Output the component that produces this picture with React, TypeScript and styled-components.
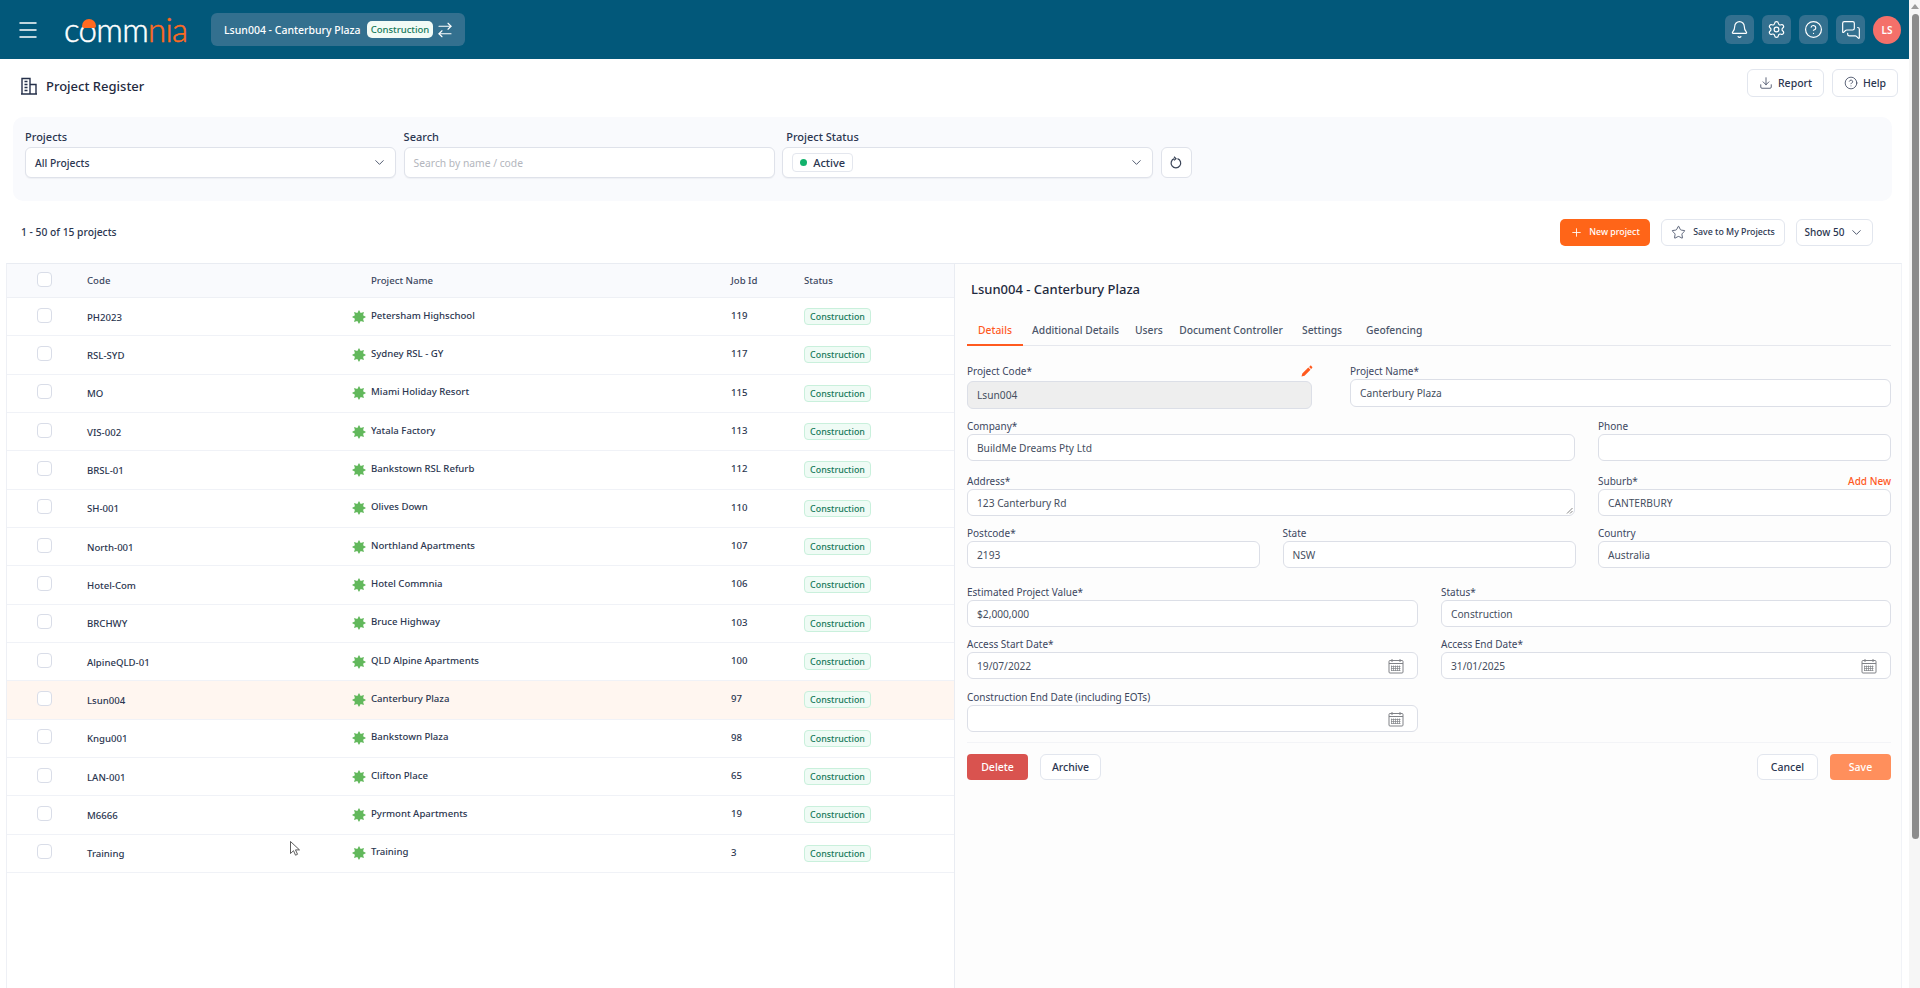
import React from "react";
import styled, { createGlobalStyle } from "styled-components";
import {
  ArrowRightLeft,
  Bell,
  ChevronDown,
  CircleHelp,
  Download,
  Menu,
  MessagesSquare,
  Plus,
  Settings,
  Star,
} from "lucide-react";

const GlobalStyle = createGlobalStyle`
  html, body, #root { margin: 0; padding: 0; height: 988px; overflow: hidden; }
  body { font-family: "Noto Sans", "Open Sans", Arial, sans-serif; color: #2b3650; background: #fff; }
  * { box-sizing: border-box; }
`;

const Shell = styled.div`
  display: flex;
  width: 1920px;
  height: 988px;
  position: relative;
`;

const Main = styled.div`
  width: 1909px;
  display: flex;
  flex-direction: column;
`;

const ScrollTrack = styled.div`
  width: 11px;
  background: #f6f6f6;
  display: flex;
  flex-direction: column;
  align-items: center;
  padding-top: 4px;
`;

const ScrollArrow = styled.div`
  width: 0;
  height: 0;
  border-left: 4px solid transparent;
  border-right: 4px solid transparent;
  border-bottom: 5px solid #9a9a9a;
  margin-bottom: 5px;
`;

const ScrollThumb = styled.div`
  width: 7px;
  height: 825px;
  margin-left: 1px;
  border-radius: 4px;
  background: #8c8c8c;
`;

const Header = styled.header`
  height: 59px;
  background: #02587a;
  display: flex;
  align-items: center;
  padding: 0 8px 0 16px;
`;

const Burger = styled.div`
  color: #fff;
  display: flex;
  width: 24px;
  margin-right: 24px;
`;

const Logo = styled.div`
  width: 123px;
  margin-right: 24px;
  margin-top: -2px;
  font-family: "Lato", sans-serif;
  font-weight: 300;
  font-size: 33px;
  line-height: 34px;
  letter-spacing: -0.7px;
  -webkit-text-stroke: 0.5px currentColor;
  color: #fff;
  white-space: nowrap;
`;

const LogoAccent = styled.span`
  color: #ff6a21;
`;

const LogoFace = styled.span`
  position: relative;
  &::after {
    content: "";
    position: absolute;
    left: 3px;
    top: 10px;
    width: 14px;
    height: 9px;
    border-radius: 7px 7px 2px 2px;
    background: #ff6a21;
  }
`;

const ProjectChip = styled.div`
  width: 254px;
  height: 33px;
  border-radius: 6px;
  background: #33708f;
  display: flex;
  align-items: center;
  padding-left: 13px;
  color: #fff;
  font-size: 10.5px;
  font-weight: 500;
  white-space: nowrap;
`;

const ChipName = styled.span`
  width: 143px;
`;

const ChipBadge = styled.span`
  width: 66px;
  height: 17px;
  border-radius: 5px;
  background: #f1fbf6;
  color: #15795a;
  font-size: 9.5px;
  font-weight: 500;
  display: flex;
  align-items: center;
  justify-content: center;
  margin-right: 3px;
`;

const HeaderActions = styled.div`
  margin-left: auto;
  display: flex;
  align-items: center;
  gap: 8px;
`;

const HeaderButton = styled.div`
  width: 29px;
  height: 29px;
  border-radius: 6px;
  background: #33708f;
  color: #fff;
  display: flex;
  align-items: center;
  justify-content: center;
`;

const Avatar = styled.div`
  width: 28px;
  height: 28px;
  border-radius: 50%;
  background: #f4706a;
  color: #fff;
  font-size: 10px;
  font-weight: 600;
  display: flex;
  align-items: center;
  justify-content: center;
`;

const TitleRow = styled.div`
  height: 58px;
  display: flex;
  justify-content: space-between;
  padding: 10px 11px 0 20px;
`;

const PageTitle = styled.div`
  display: flex;
  align-items: center;
  gap: 8px;
  height: 18px;
  margin-top: 8px;
  font-size: 13px;
  font-weight: 500;
  color: #1f2a40;
`;

const TitleActions = styled.div`
  display: flex;
  gap: 8px;
`;

const GhostButton = styled.button<{ $w: number; $h?: number; $size?: number; $gap?: number }>`
  width: ${(p) => p.$w}px;
  height: ${(p) => p.$h ?? 28}px;
  border: 1px solid #e2e6ee;
  border-radius: 6px;
  background: #fff;
  color: #2b3650;
  font-family: inherit;
  font-size: ${(p) => p.$size ?? 10.5}px;
  font-weight: 500;
  display: flex;
  align-items: center;
  justify-content: center;
  gap: ${(p) => p.$gap ?? 5}px;
  padding: 0;
  white-space: nowrap;
`;

const FilterPanel = styled.section`
  height: 84px;
  margin: 0 17px 0 13px;
  padding: 12px 12px 23px;
  border-radius: 10px;
  background: #f9fafd;
  display: flex;
  align-items: flex-end;
  gap: 7.6px;
`;

const FilterField = styled.div`
  width: 371px;
  display: flex;
  flex-direction: column;
`;

const FilterLabel = styled.label<{ $inset?: number }>`
  font-size: 11px;
  font-weight: 500;
  line-height: 16px;
  margin-bottom: 2px;
  padding-left: ${(p) => p.$inset ?? 0}px;
  color: #2b3650;
`;

const SelectBox = styled.div`
  height: 31px;
  border: 1px solid #dfe2ea;
  border-radius: 6px;
  background: #fff;
  display: flex;
  align-items: center;
  justify-content: space-between;
  padding: 0 8px 0 9px;
  font-size: 10.3px;
  font-weight: 500;
  box-shadow: 0 1px 1px rgba(40, 50, 80, 0.05);
`;

const Placeholder = styled.span`
  color: #b3b6bd;
  font-weight: 400;
`;

const StatusTag = styled.span`
  height: 19px;
  padding: 0 7px;
  border: 1px solid #e4e7ee;
  border-radius: 4px;
  display: flex;
  align-items: center;
  gap: 6px;
  font-size: 11px;
`;

const Dot = styled.span`
  width: 7px;
  height: 7px;
  border-radius: 50%;
  background: #12b26c;
`;

const ResetButton = styled.div`
  width: 31px;
  height: 31px;
  border: 1px solid #dfe2ea;
  border-radius: 6px;
  background: #fff;
  display: flex;
  align-items: center;
  justify-content: center;
  color: #3b4558;
`;

const Toolbar = styled.div`
  height: 62px;
  display: flex;
  align-items: center;
  padding: 0 36px 0 21px;
`;

const Count = styled.div`
  font-size: 10.3px;
  font-weight: 500;
  margin-right: auto;
`;

const ToolbarActions = styled.div`
  display: flex;
  gap: 11px;
`;

const PrimaryButton = styled.button`
  width: 90px;
  height: 27px;
  border: 0;
  border-radius: 5px;
  background: #ff6518;
  color: #fff;
  font-family: inherit;
  font-size: 8.8px;
  font-weight: 500;
  display: flex;
  align-items: center;
  justify-content: center;
  gap: 6px;
  padding: 0;
`;

const Split = styled.div`
  flex: 1;
  display: flex;
  min-height: 0;
  margin: 0 7px 0 6px;
  border-top: 1px solid #e9ecf2;
  border-left: 1px solid #eef0f5;
  border-right: 1px solid #f1f3f7;
`;

const TablePane = styled.div`
  width: 948px;
  border-right: 1px solid #e9ecf2;
`;

const HeadRow = styled.div`
  height: 34px;
  display: grid;
  grid-template-columns: 50px 265px 379px 73px 1fr;
  align-items: center;
  padding-left: 30px;
  background: #f9fafd;
  border-bottom: 1px solid #eef0f5;
  font-size: 9.6px;
  font-weight: 500;
  color: #3c475f;
`;

const Row = styled.div<{ $active?: boolean }>`
  height: 38.33px;
  display: grid;
  grid-template-columns: 50px 265px 379px 73px 1fr;
  align-items: center;
  padding-left: 30px;
  background: ${(p) => (p.$active ? "#fff6f0" : "#fff")};
  border-bottom: 1px solid #f0f2f7;
  font-size: 9.6px;
  font-weight: 500;
  color: #2b3650;
`;

const Check = styled.div`
  width: 15px;
  height: 15px;
  border: 1px solid #d9dde8;
  border-radius: 4px;
  background: #fff;
  margin-top: -3px;
`;

const CodeCell = styled.div`
  padding-top: 1px;
`;

const NameHead = styled.div`
  padding-left: 19px;
`;

const NameCell = styled.div`
  display: flex;
  align-items: center;
  gap: 5px;
`;

const NameText = styled.span`
  margin-top: -3px;
`;

const JobCell = styled.div`
  margin-top: -2px;
`;

const StatusBadge = styled.span`
  width: 67px;
  height: 17px;
  border: 1px solid #c9f0dc;
  border-radius: 4px;
  background: #effbf5;
  color: #15795a;
  font-size: 8.9px;
  font-weight: 500;
  display: flex;
  align-items: center;
  justify-content: center;
`;

const DetailPane = styled.div`
  flex: 1;
  padding: 15px 10px 0 12px;
  background: #fdfdfd;
`;

const DetailTitle = styled.h2`
  margin: 0 0 0 4px;
  font-size: 13px;
  line-height: 20px;
  font-weight: 500;
  color: #1f2a40;
`;

const TabBar = styled.div`
  display: flex;
  margin-top: 17px;
  height: 30px;
  border-bottom: 1px solid #e6e8ee;
`;

const Tab = styled.div<{ $active?: boolean; $mr: number; $w: number }>`
  width: ${(p) => p.$w}px;
  margin-right: ${(p) => p.$mr}px;
  height: 30px;
  text-align: center;
  white-space: nowrap;
  font-size: 10.3px;
  font-weight: 500;
  line-height: 28px;
  color: ${(p) => (p.$active ? "#ff5a1f" : "#4c566a")};
  border-bottom: ${(p) => (p.$active ? "2px solid #ff5a1f" : "0")};
`;

const FormRow = styled.div<{ $cols: string; $gap: number; $top: number }>`
  display: grid;
  grid-template-columns: ${(p) => p.$cols};
  column-gap: ${(p) => p.$gap}px;
  margin-top: ${(p) => p.$top}px;
  align-items: start;
`;

const FormField = styled.div`
  display: flex;
  flex-direction: column;
`;

const LabelLine = styled.div<{ $h?: number }>`
  display: flex;
  align-items: flex-start;
  justify-content: space-between;
  height: ${(p) => p.$h ?? 16}px;
  line-height: 16px;
`;

const Label = styled.label`
  font-size: 10px;
  color: #3c475f;
`;

const AddNew = styled.span`
  font-size: 10px;
  font-weight: 500;
  color: #ff5a1f;
`;

const PencilWrap = styled.span`
  display: flex;
  margin: 2px -1px 0 0;
`;

const Input = styled.div<{ $disabled?: boolean; $h?: number }>`
  position: relative;
  height: ${(p) => p.$h ?? 27}px;
  border: 1px solid #dcdfe7;
  border-radius: 6px;
  background: ${(p) => (p.$disabled ? "#eeeeee" : "#fff")};
  display: flex;
  align-items: center;
  justify-content: space-between;
  padding: 0 13px 0 9px;
  font-size: 10.2px;
  color: #454e60;
`;

const Grip = styled.svg`
  position: absolute;
  right: 1px;
  bottom: 1px;
`;

const FormFooter = styled.div`
  display: flex;
  justify-content: space-between;
  margin-top: 10px;
  padding-top: 11px;
  border-top: 1px solid #f3f4f7;
`;

const FooterGroup = styled.div<{ $gap: number }>`
  display: flex;
  gap: ${(p) => p.$gap}px;
`;

const SolidButton = styled.button<{ $bg: string }>`
  width: 61px;
  height: 26px;
  border: 0;
  border-radius: 4px;
  background: ${(p) => p.$bg};
  color: #fff;
  font-family: inherit;
  font-size: 10.5px;
  font-weight: 500;
  padding: 0;
`;

const Cursor = styled.svg`
  position: absolute;
  left: 290px;
  top: 841px;
`;

const BuildingIcon = () => (
  <svg width="18" height="18" viewBox="0 0 18 18" fill="none" stroke="#25304a" strokeWidth="1.4">
    <path d="M1 17h16M2 17V1.5h8V17M10 7.5h6V17" />
    <path d="M4.5 4.5h3M4.5 7.5h3M4.5 10.5h3M4.5 13.5h3" />
  </svg>
);

const ResetIcon = () => (
  <svg width="14" height="14" viewBox="0 0 14 14" fill="none" stroke="#3b4558" strokeWidth="1.2">
    <path d="M8.5 2.6a4.8 4.8 0 1 1-3.2 0" />
    <path d="M5 0.8L7 2.7 5 4.4" />
  </svg>
);

const SEAL_POINTS = Array.from({ length: 16 }, (_, i) => {
  const r = i % 2 === 0 ? 7 : 4.4;
  const a = (i * Math.PI) / 8 - Math.PI / 2;
  return `${(7 + r * Math.cos(a)).toFixed(2)},${(7 + r * Math.sin(a)).toFixed(2)}`;
}).join(" ");

const Seal = () => (
  <svg width="14" height="14" viewBox="0 0 14 14">
    <polygon points={SEAL_POINTS} fill="#62b85c" />
  </svg>
);

const CalendarIcon = () => (
  <svg width="16" height="16" viewBox="0 0 16 16" fill="none" stroke="#808287" strokeWidth="1">
    <rect x="1" y="2.5" width="14" height="12.5" rx="1" />
    <path d="M1 5.5h14M4 1v3M12 1v3" />
    <path d="M3.5 7.5v5.5M5.5 7.5v5.5M7.5 7.5v5.5M9.5 7.5v5.5M11.5 7.5v5.5M3 8.5h9.5M3 10.5h9.5M3 12.5h9.5" strokeWidth="0.7" />
  </svg>
);

const PencilIcon = () => (
  <svg width="12" height="12" viewBox="0 0 12 12" fill="#ff5a1f">
    <path d="M0.5 11.5l0.8-3 6-6 2.2 2.2-6 6zM8.1 1.9l1-1c.4-.4.9-.4 1.2 0l.8.8c.4.3.4.8 0 1.2l-1 1z" />
  </svg>
);

const projects = [
  ["PH2023", "Petersham Highschool", "119"],
  ["RSL-SYD", "Sydney RSL - GY", "117"],
  ["MO", "Miami Holiday Resort", "115"],
  ["VIS-002", "Yatala Factory", "113"],
  ["BRSL-01", "Bankstown RSL Refurb", "112"],
  ["SH-001", "Olives Down", "110"],
  ["North-001", "Northland Apartments", "107"],
  ["Hotel-Com", "Hotel Commnia", "106"],
  ["BRCHWY", "Bruce Highway", "103"],
  ["AlpineQLD-01", "QLD Alpine Apartments", "100"],
  ["Lsun004", "Canterbury Plaza", "97"],
  ["Kngu001", "Bankstown Plaza", "98"],
  ["LAN-001", "Clifton Place", "65"],
  ["M6666", "Pyrmont Apartments", "19"],
  ["Training", "Training", "3"],
];

const tabs = [
  { label: "Details", w: 56, mr: 9 },
  { label: "Additional Details", w: 87, mr: 16 },
  { label: "Users", w: 27, mr: 17 },
  { label: "Document Controller", w: 104, mr: 19 },
  { label: "Settings", w: 40, mr: 24 },
  { label: "Geofencing", w: 56, mr: 0 },
];

const App = () => {
  return (
    <Shell>
      <GlobalStyle />
      <Main>
        <Header>
          <Burger>
            <Menu size={24} strokeWidth={1.5} />
          </Burger>
          <Logo>
            c<LogoFace>o</LogoFace>mm<LogoAccent>nia</LogoAccent>
          </Logo>
          <ProjectChip>
            <ChipName>Lsun004 - Canterbury Plaza</ChipName>
            <ChipBadge>Construction</ChipBadge>
            <ArrowRightLeft size={18} strokeWidth={1.5} />
          </ProjectChip>
          <HeaderActions>
            <HeaderButton><Bell size={19} strokeWidth={1.5} /></HeaderButton>
            <HeaderButton><Settings size={19} strokeWidth={1.5} /></HeaderButton>
            <HeaderButton><CircleHelp size={19} strokeWidth={1.5} /></HeaderButton>
            <HeaderButton><MessagesSquare size={20} strokeWidth={1.4} /></HeaderButton>
            <Avatar>LS</Avatar>
          </HeaderActions>
        </Header>

        <TitleRow>
          <PageTitle>
            <BuildingIcon />
            Project Register
          </PageTitle>
          <TitleActions>
            <GhostButton $w={77}><Download size={14} strokeWidth={1.3} />Report</GhostButton>
            <GhostButton $w={66}><CircleHelp size={14} strokeWidth={1.3} />Help</GhostButton>
          </TitleActions>
        </TitleRow>

        <FilterPanel>
          <FilterField>
            <FilterLabel>Projects</FilterLabel>
            <SelectBox>All Projects<ChevronDown size={15} strokeWidth={1.3} /></SelectBox>
          </FilterField>
          <FilterField>
            <FilterLabel>Search</FilterLabel>
            <SelectBox><Placeholder>Search by name / code</Placeholder></SelectBox>
          </FilterField>
          <FilterField>
            <FilterLabel $inset={4}>Project Status</FilterLabel>
            <SelectBox>
              <StatusTag><Dot />Active</StatusTag>
              <ChevronDown size={15} strokeWidth={1.3} />
            </SelectBox>
          </FilterField>
          <ResetButton><ResetIcon /></ResetButton>
        </FilterPanel>

        <Toolbar>
          <Count>1 - 50 of 15 projects</Count>
          <ToolbarActions>
            <PrimaryButton><Plus size={13} strokeWidth={1.6} />New project</PrimaryButton>
            <GhostButton $w={124} $h={27} $size={8.8} $gap={7}><Star size={15} strokeWidth={1.2} />Save to My Projects</GhostButton>
            <GhostButton $w={77} $h={27} $size={10}>Show 50<ChevronDown size={15} strokeWidth={1.3} /></GhostButton>
          </ToolbarActions>
        </Toolbar>

        <Split>
          <TablePane>
            <HeadRow>
              <Check />
              <div>Code</div>
              <NameHead>Project Name</NameHead>
              <div>Job Id</div>
              <div>Status</div>
            </HeadRow>
            {projects.map(([code, name, job]) => (
              <Row key={code} $active={code === "Lsun004"}>
                <Check />
                <CodeCell>{code}</CodeCell>
                <NameCell><Seal /><NameText>{name}</NameText></NameCell>
                <JobCell>{job}</JobCell>
                <StatusBadge>Construction</StatusBadge>
              </Row>
            ))}
          </TablePane>

          <DetailPane>
            <DetailTitle>Lsun004 - Canterbury Plaza</DetailTitle>
            <TabBar>
              {tabs.map((t) => (
                <Tab key={t.label} $active={t.label === "Details"} $w={t.w} $mr={t.mr}>{t.label}</Tab>
              ))}
            </TabBar>

            <FormRow $cols="345px 541px" $gap={38} $top={17}>
              <FormField>
                <LabelLine $h={18}><Label>Project Code*</Label><PencilWrap><PencilIcon /></PencilWrap></LabelLine>
                <Input $disabled $h={28}>Lsun004</Input>
              </FormField>
              <FormField>
                <LabelLine><Label>Project Name*</Label></LabelLine>
                <Input $h={28}>Canterbury Plaza</Input>
              </FormField>
            </FormRow>
            <FormRow $cols="608px 293px" $gap={23} $top={9}>
              <FormField>
                <LabelLine><Label>Company*</Label></LabelLine>
                <Input>BuildMe Dreams Pty Ltd</Input>
              </FormField>
              <FormField>
                <LabelLine><Label>Phone</Label></LabelLine>
                <Input />
              </FormField>
            </FormRow>
            <FormRow $cols="608px 293px" $gap={23} $top={12}>
              <FormField>
                <LabelLine><Label>Address*</Label></LabelLine>
                <Input>
                  123 Canterbury Rd
                  <Grip width="7" height="7" viewBox="0 0 7 7" stroke="#666" strokeWidth="0.8">
                    <path d="M1 6.5L6.5 1M4 6.5L6.5 4" />
                  </Grip>
                </Input>
              </FormField>
              <FormField>
                <LabelLine><Label>Suburb*</Label><AddNew>Add New</AddNew></LabelLine>
                <Input>CANTERBURY</Input>
              </FormField>
            </FormRow>
            <FormRow $cols="293px 293px 293px" $gap={22.5} $top={9}>
              <FormField>
                <LabelLine><Label>Postcode*</Label></LabelLine>
                <Input>2193</Input>
              </FormField>
              <FormField>
                <LabelLine><Label>State</Label></LabelLine>
                <Input>NSW</Input>
              </FormField>
              <FormField>
                <LabelLine><Label>Country</Label></LabelLine>
                <Input>Australia</Input>
              </FormField>
            </FormRow>
            <FormRow $cols="451px 450px" $gap={23} $top={16}>
              <FormField>
                <LabelLine><Label>Estimated Project Value*</Label></LabelLine>
                <Input>$2,000,000</Input>
              </FormField>
              <FormField>
                <LabelLine><Label>Status*</Label></LabelLine>
                <Input>Construction</Input>
              </FormField>
            </FormRow>
            <FormRow $cols="451px 450px" $gap={23} $top={9}>
              <FormField>
                <LabelLine><Label>Access Start Date*</Label></LabelLine>
                <Input>19/07/2022<CalendarIcon /></Input>
              </FormField>
              <FormField>
                <LabelLine><Label>Access End Date*</Label></LabelLine>
                <Input>31/01/2025<CalendarIcon /></Input>
              </FormField>
            </FormRow>
            <FormRow $cols="451px 450px" $gap={23} $top={10}>
              <FormField>
                <LabelLine><Label>Construction End Date (including EOTs)</Label></LabelLine>
                <Input><span /><CalendarIcon /></Input>
              </FormField>
            </FormRow>

            <FormFooter>
              <FooterGroup $gap={12}>
                <SolidButton $bg="#d9534f">Delete</SolidButton>
                <GhostButton $w={61} $h={26}>Archive</GhostButton>
              </FooterGroup>
              <FooterGroup $gap={12}>
                <GhostButton $w={61} $h={26}>Cancel</GhostButton>
                <SolidButton $bg="#ff8f5c">Save</SolidButton>
              </FooterGroup>
            </FormFooter>
          </DetailPane>
        </Split>
      </Main>
      <ScrollTrack>
        <ScrollArrow />
        <ScrollThumb />
      </ScrollTrack>
      <Cursor width="11" height="15" viewBox="0 0 11 15">
        <path d="M0.5 0.5v12l3-2.8 2 4.5 2-0.9-2-4.4h4z" fill="#fff" stroke="#333" strokeWidth="0.8" />
      </Cursor>
    </Shell>
  );
};

export default App;
